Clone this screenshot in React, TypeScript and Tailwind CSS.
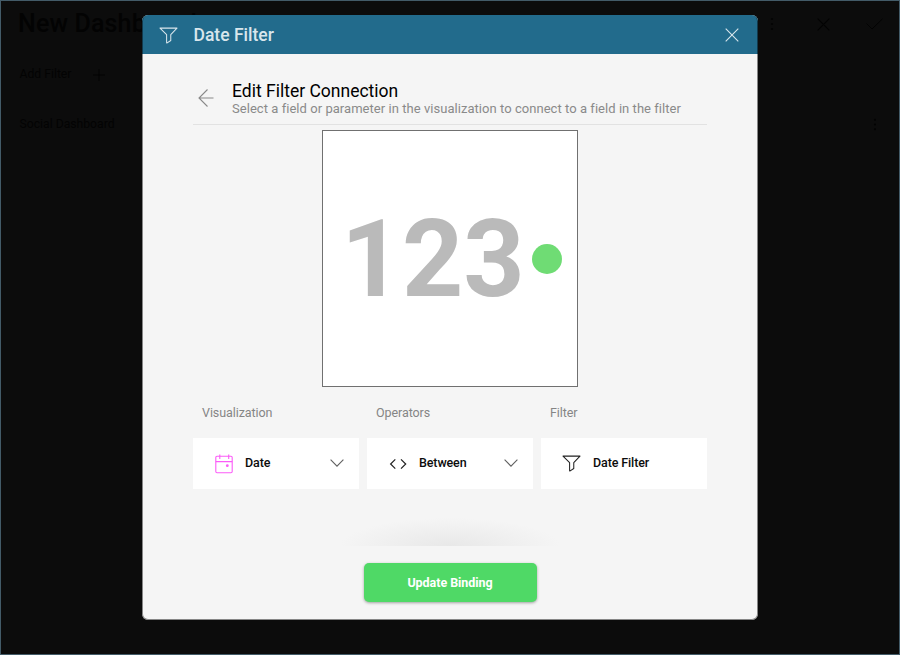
import type { ReactNode } from "react";

function FunnelIcon({ className }: { className?: string }) {
  return (
    <svg viewBox="0 0 20 18" className={className} fill="none" stroke="currentColor" strokeWidth="1.1" strokeLinejoin="round">
      <path d="M1 1.2H19L12.4 8V14.3L8.6 16.8H8V8Z" />
    </svg>
  );
}

function DotsIcon({ className }: { className?: string }) {
  return (
    <svg viewBox="0 0 4 14" className={className} fill="currentColor">
      <circle cx="2" cy="2" r="1.1" />
      <circle cx="2" cy="7" r="1.1" />
      <circle cx="2" cy="12" r="1.1" />
    </svg>
  );
}

function CrossIcon({ className }: { className?: string }) {
  return (
    <svg viewBox="0 0 14 14" className={className} fill="none" stroke="currentColor" strokeWidth="1.1">
      <path d="M0.7 0.7L13.3 13.3M13.3 0.7L0.7 13.3" />
    </svg>
  );
}

function CalendarIcon() {
  return (
    <svg viewBox="0 0 18 20" className="h-5 w-[18px] text-[#fb5cf8]" fill="none" stroke="currentColor" strokeWidth="1.1">
      <rect x="0.8" y="2.3" width="16.4" height="16.4" rx="1.2" />
      <path d="M0.8 7.6H17.2M4.8 0.5V5M13.7 0.5V5" />
      <circle cx="12.3" cy="11.7" r="1.4" fill="currentColor" stroke="none" />
    </svg>
  );
}

function AngleIcon() {
  return (
    <svg viewBox="0 0 18 12" className="h-3 w-[18px] text-[#202020]" fill="none" stroke="currentColor" strokeWidth="1.2">
      <path d="M6.3 1.3L1.6 6L6.3 10.7M12 1.3L16.7 6L12 10.7" />
    </svg>
  );
}

function ChevronIcon() {
  return (
    <svg viewBox="0 0 14 8" className="mr-[15px] mb-px ml-auto h-2 w-[14px] text-[#606060]" fill="none" stroke="currentColor" strokeWidth="1.1">
      <path d="M0.6 0.7L7 7.1L13.4 0.7" />
    </svg>
  );
}

function Field({ label, value, icon, dropdown }: { label: string; value: string; icon: ReactNode; dropdown?: boolean }) {
  return (
    <div className="flex w-[166px] flex-col">
      <div className="h-[33px] pl-[9px] text-[12.5px] leading-[16px] tracking-[-0.08px] text-[#858585]">{label}</div>
      <div className="flex h-[51px] items-center bg-white">
        <div className="flex w-[52px] shrink-0 justify-center pl-[9px]">{icon}</div>
        <span className="text-[12.5px] font-medium tracking-[-0.12px] text-[#0c0c0c]">{value}</span>
        {dropdown && <ChevronIcon />}
      </div>
    </div>
  );
}

function Dashboard() {
  return (
    <div className="flex h-full flex-col text-[#030303]">
      <div className="flex h-[49px] items-center justify-between pr-4 pl-[17px]">
        <h1 className="mt-[-4px] text-[25px] font-medium tracking-[0.15px]">New Dashboard</h1>
        <div className="mt-[-3px] flex items-center">
          <DotsIcon className="mr-[43px] h-[14px] w-1" />
          <CrossIcon className="mr-9 h-[13px] w-[13px]" />
          <svg viewBox="0 0 17 12" className="h-3 w-[17px]" fill="none" stroke="currentColor">
            <path d="M0.5 5.5L6 11L16.5 0.8" />
          </svg>
        </div>
      </div>
      <div className="flex h-[49px] items-center pl-[18.5px] text-[12.2px]">
        <span>Add Filter</span>
        <svg viewBox="0 0 12 12" className="ml-[22px] h-3 w-3" fill="none" stroke="currentColor">
          <path d="M6 0V12M0 6H12" />
        </svg>
      </div>
      <div className="flex h-[50px] items-center justify-between pr-[22px] pl-[18.5px] text-[12.2px]">
        <span>Social Dashboard</span>
        <DotsIcon className="h-[13px] w-1" />
      </div>
    </div>
  );
}

function FilterDialog() {
  return (
    <div className="absolute top-[15px] left-[142px] flex h-[605px] w-[616px] flex-col overflow-hidden rounded-[6px] bg-[#f5f5f5]">
      <header className="flex h-[39px] shrink-0 items-center bg-[#226b8c] pr-[19px] pl-[17px] text-[#d9e6ec]">
        <FunnelIcon className="mt-px h-[17px] w-[19px]" />
        <h2 className="ml-[15.5px] pt-[2px] text-[17.5px] font-medium">Date Filter</h2>
        <CrossIcon className="ml-auto h-[14px] w-[14px]" />
      </header>
      <main className="flex flex-1 flex-col px-[51px]">
        <div className="flex h-[71px] shrink-0 border-b border-[#e2e2e2]">
          <svg viewBox="0 0 16 18" className="mt-[35px] ml-[5px] h-[18px] w-4 text-[#8a8a8a]" fill="none" stroke="currentColor" strokeWidth="1.1">
            <path d="M9.5 0.5L1 9L9.5 17.5M1 9H15.5" />
          </svg>
          <div className="ml-[18px] pt-[27px]">
            <h3 className="text-[17.5px] leading-[20px] text-black">Edit Filter Connection</h3>
            <p className="text-[13px] leading-[16px] tracking-[0.045px] whitespace-nowrap text-[#8a8a8a]">
              Select a field or parameter in the visualization to connect to a field in the filter
            </p>
          </div>
        </div>
        <div className="mt-[5px] flex h-[257px] w-[256px] shrink-0 items-center self-center border border-[#707070] bg-white pl-[18px]">
          <span className="pt-[2px] text-[107px] leading-none font-bold tracking-[-0.3px] text-[#bababa]">123</span>
          <span className="ml-[8px] size-[30px] rounded-full bg-[#6fdc74]" />
        </div>
        <div className="mt-[18px] flex justify-between">
          <Field label="Visualization" value="Date" icon={<CalendarIcon />} dropdown />
          <Field label="Operators" value="Between" icon={<AngleIcon />} dropdown />
          <Field label="Filter" value="Date Filter" icon={<FunnelIcon className="h-[17px] w-[19px] text-[#202020]" />} />
        </div>
      </main>
      <footer className="flex shrink-0 flex-col items-center pb-[18px]">
        <div className="h-[30px] w-[230px] bg-[radial-gradient(ellipse_110px_28px_at_50%_100%,#e8e8e8,#f5f5f5)]" />
        <button className="mt-[17px] h-[39px] w-[173px] rounded-[5px] bg-[#4fd966] pt-px text-[12.5px] font-bold tracking-[-0.05px] text-white shadow-[0_1px_3px_rgba(0,0,0,0.35)]">
          Update Binding
        </button>
      </footer>
      <div className="pointer-events-none absolute inset-0 rounded-[6px] border border-t-0 border-black/45" />
    </div>
  );
}

export default function App() {
  return (
    <div className="relative h-[655px] w-[900px] overflow-hidden border border-[#435b68] bg-[#0c0c0c] font-[Roboto,sans-serif]">
      <Dashboard />
      <div className="absolute -inset-px">
        <FilterDialog />
      </div>
    </div>
  );
}
